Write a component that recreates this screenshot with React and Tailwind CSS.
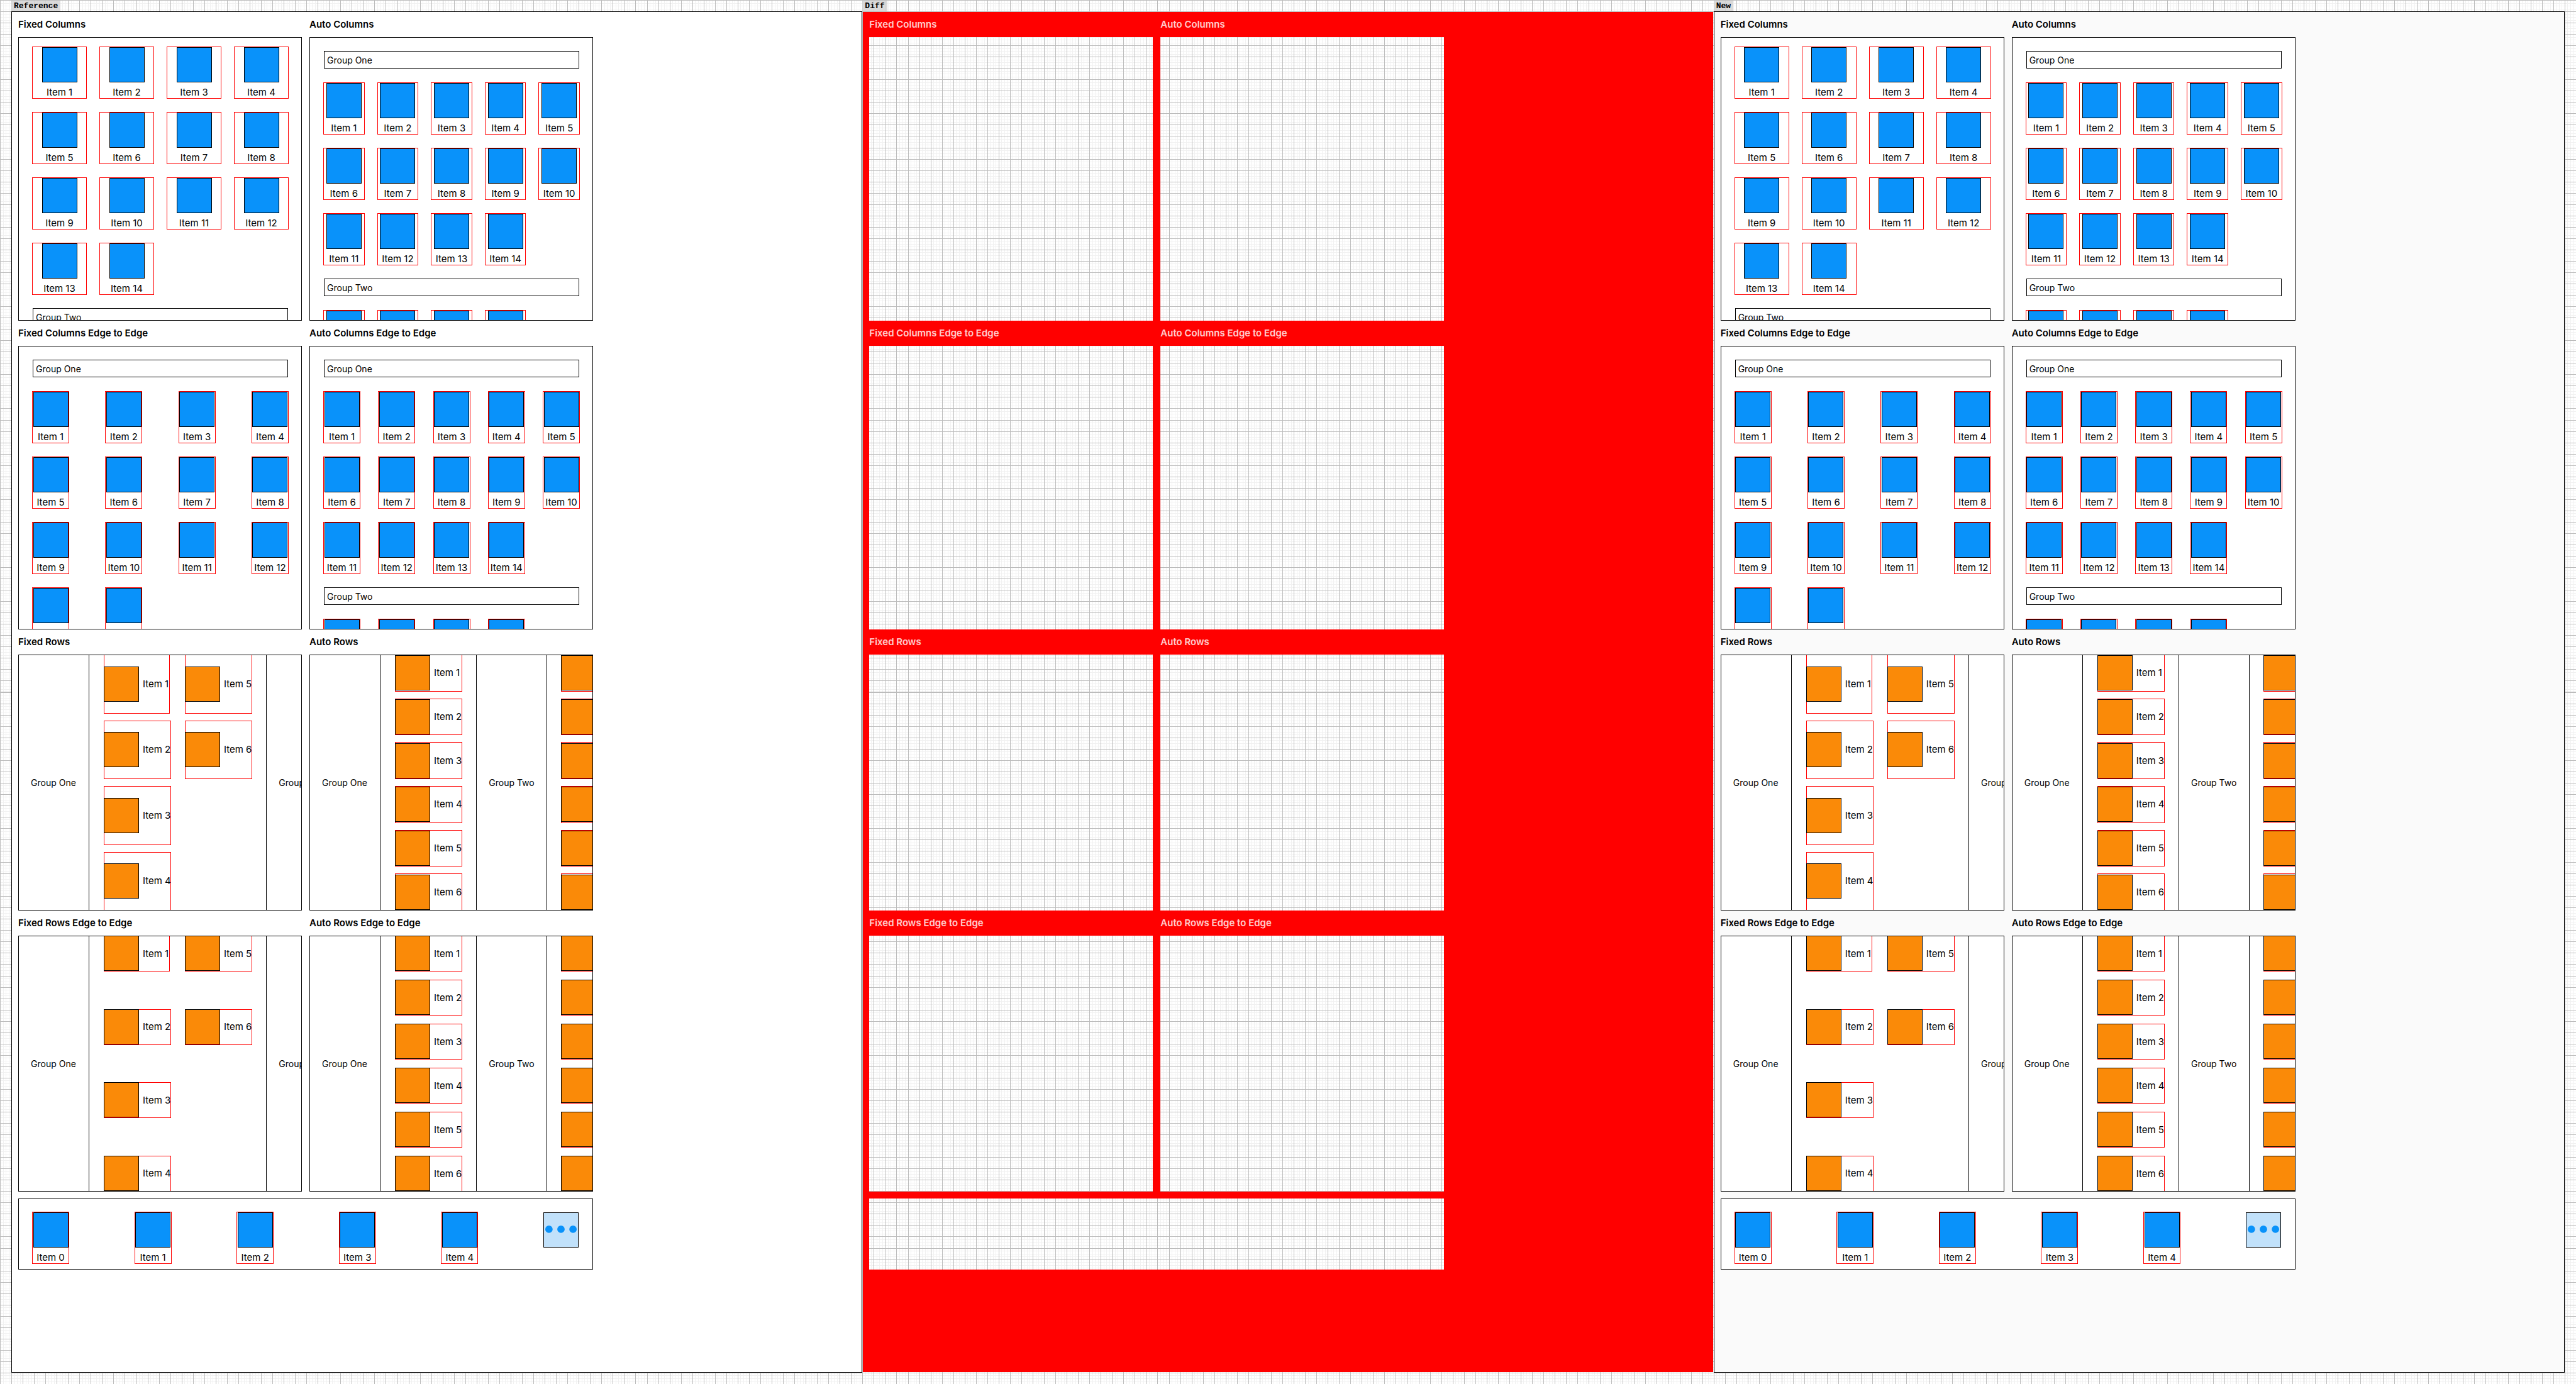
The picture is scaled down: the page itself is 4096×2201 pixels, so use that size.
import React from "react";

const items = (n, from = 1) => Array.from({ length: n }, (_, i) => `Item ${from + i}`);

const gridLayouts = {
  fixed: "grid-cols-4 gap-x-5",
  auto: "grid-cols-5 gap-x-5",
  fixedEdge: "grid-cols-[repeat(4,59px)] justify-between",
  autoEdge: "grid-cols-[repeat(5,59px)] justify-between",
};

/* Vertical tile: blue square with a caption below it */
function Tile({ label, as: Tag = "li" }) {
  return (
    <Tag className="flex h-[83px] min-w-[59px] flex-col items-center border border-[#ff0000]">
      <div className="size-14 shrink-0 border border-black bg-[#0992fa]" />
      {label && (
        <span className="mt-[7px] text-[15px] leading-[18px] whitespace-nowrap">{label}</span>
      )}
    </Tag>
  );
}

function GroupBar({ children }) {
  return (
    <h3 className="mx-px flex h-7 shrink-0 items-center border border-black px-1 text-[14px]">
      {children}
    </h3>
  );
}

function TileGrid({ layout, labels }) {
  return (
    <ul className={`grid gap-y-[21px] ${gridLayouts[layout]}`}>
      {labels.map((label, i) => (
        <Tile key={i} label={label} />
      ))}
    </ul>
  );
}

function ColumnsPanel({ layout, scrolled = false, peek = 0 }) {
  return (
    <div
      className={`h-[451px] overflow-hidden border border-black bg-white pr-5 pl-[21px] ${
        scrolled ? "pt-[14px]" : "pt-[21px]"
      }`}
    >
      {!scrolled && (
        <div className="mb-[22px]">
          <GroupBar>Group One</GroupBar>
        </div>
      )}
      <TileGrid layout={layout} labels={items(14)} />
      {(scrolled || peek > 0) && (
        <div className="mt-[21px] mb-[22px]">
          <GroupBar>Group Two</GroupBar>
        </div>
      )}
      <TileGrid layout={layout} labels={Array(peek).fill("")} />
    </div>
  );
}

/* Horizontal tile: orange square with a caption to its right */
function RowTile({ label, edge = false, hug = false }) {
  return (
    <li
      className={`flex items-center border border-[#ff0000] ${hug ? "w-[105px]" : "w-[107px]"} ${
        edge ? "h-[57px]" : "min-h-0 flex-1"
      }`}
    >
      <div
        className={`-ml-px size-14 shrink-0 border border-black bg-[#fa8a08] ${
          edge ? "-mt-px" : ""
        }`}
      />
      {label && (
        <span className="ml-[6px] text-[15px] leading-[18px] whitespace-nowrap">{label}</span>
      )}
    </li>
  );
}

function RowStack({ labels, edge, slots, hugFirst = false }) {
  const blanks = Math.max(0, slots - labels.length);
  return (
    <ul className={`flex shrink-0 flex-col ${edge ? "justify-between" : "gap-[11px]"}`}>
      {labels.map((label, i) => (
        <RowTile key={i} label={label} edge={edge} hug={hugFirst && i === 0} />
      ))}
      {Array.from({ length: blanks }, (_, i) => (
        <li
          key={`blank-${i}`}
          aria-hidden="true"
          className={`border border-transparent ${edge ? "h-[57px]" : "flex-1"}`}
        />
      ))}
    </ul>
  );
}

function GroupColumn({ children, first = false }) {
  return (
    <h3
      className={`flex w-[113px] shrink-0 items-center justify-center border-r border-black text-[14px] whitespace-nowrap ${
        first ? "" : "border-l"
      }`}
    >
      {children}
    </h3>
  );
}

function RowsPanel({ auto = false, edge = false }) {
  return (
    <div className="flex h-[407px] overflow-hidden border border-black bg-white">
      <div className="-my-px -ml-px flex min-w-0 flex-1">
        <GroupColumn first>Group One</GroupColumn>
        <div className="flex shrink-0 gap-[22px] pr-[22px] pl-[23px]">
          {auto ? (
            <RowStack labels={items(6)} edge={edge} slots={6} />
          ) : (
            <>
              <RowStack labels={items(4)} edge={edge} slots={4} hugFirst />
              <RowStack labels={items(2, 5)} edge={edge} slots={4} />
            </>
          )}
        </div>
        <GroupColumn>Group Two</GroupColumn>
        {auto && (
          <div className="flex shrink-0 pl-[22px]">
            <RowStack labels={Array(6).fill("")} edge={edge} slots={6} />
          </div>
        )}
      </div>
    </div>
  );
}

const sections = [
  {
    titles: ["Fixed Columns", "Auto Columns"],
    tall: true,
    panels: [<ColumnsPanel layout="fixed" scrolled />, <ColumnsPanel layout="auto" peek={4} />],
  },
  {
    titles: ["Fixed Columns Edge to Edge", "Auto Columns Edge to Edge"],
    tall: true,
    panels: [<ColumnsPanel layout="fixedEdge" />, <ColumnsPanel layout="autoEdge" peek={4} />],
  },
  {
    titles: ["Fixed Rows", "Auto Rows"],
    tall: false,
    panels: [<RowsPanel />, <RowsPanel auto />],
  },
  {
    titles: ["Fixed Rows Edge to Edge", "Auto Rows Edge to Edge"],
    tall: false,
    panels: [<RowsPanel edge />, <RowsPanel auto edge />],
  },
];

function Titles({ titles }) {
  return (
    <div className="grid grid-cols-2 gap-3">
      {titles.map((title) => (
        <h2 key={title} className="flex h-10 items-center text-[15px] font-semibold">
          {title}
        </h2>
      ))}
    </div>
  );
}

function Toolbar() {
  return (
    <div className="mt-[11px] flex items-start justify-between border border-black bg-white pt-5 pr-[22px] pb-2 pl-[21px]">
      {items(5, 0).map((label) => (
        <Tile key={label} label={label} as="div" />
      ))}
      <button type="button" aria-label="More items" className="mt-px size-14 border border-black bg-[#c1e1fa]">
        <svg viewBox="2 2 96 96" className="block size-full" fill="#0992fa" aria-hidden="true">
          <circle cx="16" cy="48" r="10.5" />
          <circle cx="50" cy="48" r="10.5" />
          <circle cx="84" cy="48" r="10.5" />
        </svg>
      </button>
    </div>
  );
}

function Board({ className }) {
  return (
    <div className={`flex-1 border border-black px-[10px] ${className}`}>
      <div className="w-full max-w-[914px]">
        {sections.map(({ titles, panels }) => (
          <section key={titles[0]}>
            <Titles titles={titles} />
            <div className="grid grid-cols-2 gap-3">
              {panels.map((panel, i) => (
                <React.Fragment key={i}>{panel}</React.Fragment>
              ))}
            </div>
          </section>
        ))}
        <Toolbar />
      </div>
    </div>
  );
}

/* Changed pixels are solid red; unchanged panels stay see-through */
function DiffBoard() {
  return (
    <div className="flex flex-1 border border-transparent text-white/80">
      <div className="w-[10px] bg-[#ff0000]" />
      <div className="flex w-full max-w-[914px] flex-col">
        {sections.map(({ titles, tall }) => (
          <section key={titles[0]}>
            <div className="bg-[#ff0000]">
              <Titles titles={titles} />
            </div>
            <div className={`flex ${tall ? "h-[451px]" : "h-[407px]"}`}>
              <div className="flex-1" />
              <div className="w-3 bg-[#ff0000]" />
              <div className="flex-1" />
            </div>
          </section>
        ))}
        <div className="h-[11px] bg-[#ff0000]" />
        <div className="h-[113px]" />
        <div className="flex-1 bg-[#ff0000]" />
      </div>
      <div className="flex-1 bg-[#ff0000]" />
    </div>
  );
}

function Frame({ name, children }) {
  return (
    <div className="flex min-w-0 flex-1 flex-col">
      <div className="flex h-[18px] items-end">
        <span className="flex h-[17px] items-center bg-[#d4d4d4d9] px-1 font-['Liberation_Mono',monospace] text-[13px] font-bold">
          {name}
        </span>
      </div>
      {children}
    </div>
  );
}

export default function App() {
  return (
    <main className="flex min-h-screen bg-white bg-[repeating-linear-gradient(to_right,#bcbcbc_0_1px,transparent_1px_calc(100%/227)),repeating-linear-gradient(to_bottom,#bcbcbc_0_1px,transparent_1px_calc(100%/122)),repeating-linear-gradient(to_right,#f1f1f1_0_1px,transparent_1px_calc(100%/908)),repeating-linear-gradient(to_bottom,#f1f1f1_0_1px,transparent_1px_calc(100%/488))] px-[18px] pb-[18px] font-['Inter',sans-serif] text-black">
      <Frame name="Reference">
        <Board className="bg-white" />
      </Frame>
      <Frame name="Diff">
        <DiffBoard />
      </Frame>
      <Frame name="New">
        <Board className="bg-[#fafafa]" />
      </Frame>
    </main>
  );
}
